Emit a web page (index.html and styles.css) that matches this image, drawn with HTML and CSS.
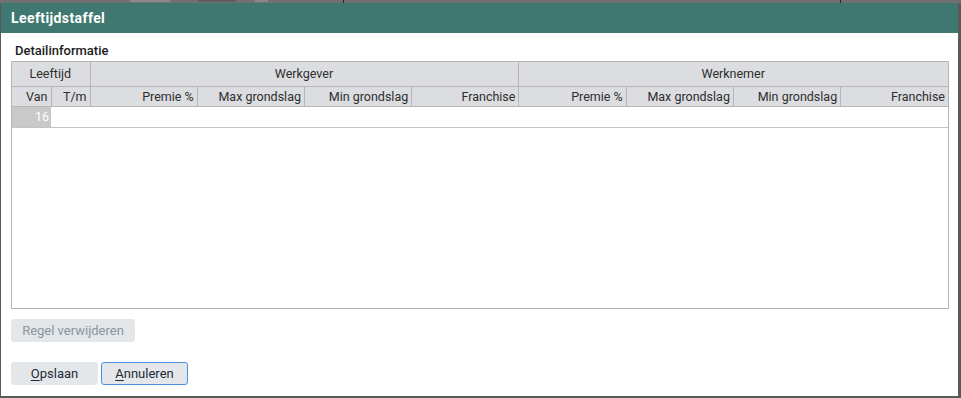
FILE: index.html
```html
<!DOCTYPE html>
<html lang="nl">
<head>
<meta charset="utf-8">
<title>Leeftijdstaffel</title>
<link rel="stylesheet" href="styles.css">
</head>
<body>
<div class="backdrop">
  <span class="bd-a"></span><span class="bd-b"></span><span class="bd-c"></span><span class="bd-d"></span><span class="bd-e"></span>
</div>
<div class="dialog">
  <div class="titlebar">Leeftijdstaffel</div>
  <div class="content">
    <div class="section-title">Detailinformatie</div>
    <div class="grid">
      <table>
        <colgroup>
          <col class="c-age"><col class="c-age">
          <col><col><col><col><col><col><col><col>
        </colgroup>
        <thead>
          <tr class="h1">
            <th colspan="2" class="center">Leeftijd</th>
            <th colspan="4" class="center">Werkgever</th>
            <th colspan="4" class="center last">Werknemer</th>
          </tr>
          <tr class="h2">
            <th>Van</th><th>T/m</th>
            <th>Premie %</th><th>Max grondslag</th><th>Min grondslag</th><th>Franchise</th>
            <th>Premie %</th><th>Max grondslag</th><th>Min grondslag</th><th class="last">Franchise</th>
          </tr>
        </thead>
        <tbody>
          <tr class="row">
            <td class="ro">16</td><td></td><td></td><td></td><td></td><td></td><td></td><td></td><td></td><td></td>
          </tr>
        </tbody>
      </table>
    </div>
    <div class="actions">
      <button class="btn disabled" disabled>Regel verwijderen</button>
    </div>
    <div class="footer">
      <button class="btn"><u>O</u>pslaan</button>
      <button class="btn focus"><u>A</u>nnuleren</button>
    </div>
  </div>
</div>
</body>
</html>
```
FILE: styles.css
```css
* { box-sizing: border-box; }
html, body { margin: 0; padding: 0; }
body {
  width: 961px;
  height: 398px;
  overflow: hidden;
  background: #6e6e6e;
  font-family: Roboto, "Liberation Sans", sans-serif;
  font-size: 13px;
  color: #2b2b2b;
}
.backdrop {
  height: 3px;
  background: #717171;
  position: relative;
}
.backdrop span { position: absolute; top: 0; height: 2px; }
.bd-a { left: 130px; width: 40px; background: #8a8a8a; }
.bd-b { left: 198px; width: 38px; background: #5e5e5e; }
.bd-c { left: 255px; width: 13px; background: #888; }
.bd-d { left: 343px; width: 1px; background: #222; height: 3px !important; }
.bd-e { left: 840px; width: 1px; background: #222; height: 3px !important; }

.dialog {
  height: 395px;
  background: #fff;
  border-left: 1px solid #5a5a5a;
  border-right: 3px solid #5a5a5a;
  border-bottom: 2px solid #5a5a5a;
  display: flex;
  flex-direction: column;
}
.titlebar {
  height: 30px;
  background: #3e7870;
  color: #fff;
  font-weight: 700;
  font-size: 14px;
  letter-spacing: 0.4px;
  padding-left: 10px;
  display: flex;
  align-items: center;
}
.content {
  flex: 1;
  padding: 0 9px 0 10px;
  display: flex;
  flex-direction: column;
}
.section-title {
  font-weight: 500;
  font-size: 13px;
  color: #1c1c1c;
  padding-left: 4px;
  height: 28px;
  padding-top: 10px;
  line-height: 16px;
}
.grid {
  height: 248px;
  border: 1px solid #b4b4b4;
  overflow: hidden;
}
table {
  width: 100%;
  border-collapse: collapse;
  table-layout: fixed;
}
col.c-age { width: 39px; }
th {
  background: #dcdde0;
  font-weight: 400;
  font-size: 12.5px;
  color: #2e2e2e;
  text-align: right;
  padding: 0 3px 0 2px;
  border-right: 1px solid #b6b6b6;
  border-bottom: 1px solid #b6b6b6;
  white-space: nowrap;
  overflow: hidden;
  line-height: 15px;
}
th.center { text-align: center; }
th.last { border-right: none; }
tr.h1 th { height: 24px; padding-bottom: 1px; }
tr.h2 th { height: 20px; }
td {
  height: 21px;
  border-bottom: 1px solid #c4c4c4;
  padding: 0 3px;
  line-height: 15px;
  font-size: 12.5px;
}
td.ro {
  background: #c9c9c9;
  color: #fff;
  text-align: right;
  padding-right: 2px;
}
.actions {
  padding-top: 10px;
  height: 53px;
}
.btn {
  font-family: Roboto, "Liberation Sans", sans-serif;
  font-size: 13px;
  height: 23px;
  border: 1px solid #e3e7ea;
  background: #e3e7ea;
  border-radius: 3px;
  color: #1f2a36;
  padding: 0;
  margin: 0;
}
.btn.disabled {
  width: 124px;
  color: #8b959d;
}
.footer {
  display: flex;
  gap: 3px;
}
.footer .btn { width: 87px; }
.btn.focus { border-color: #4b8fe0; }
.btn u { text-decoration: underline; text-underline-offset: 2px; }
```
